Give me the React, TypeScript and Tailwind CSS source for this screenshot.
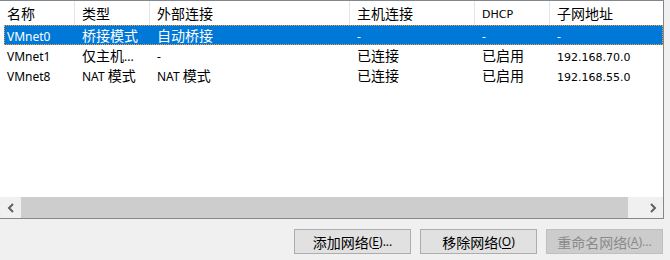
import React from "react";

const CJK_RE = /([\u2E80-\u9FFF\u3000-\u303F\uFF00-\uFFEF]+)/;

function T({ s, small = false }: { s: string; small?: boolean }) {
  const parts = s.split(CJK_RE).filter((p) => p.length > 0);
  return (
    <>
      {parts.map((p, i) =>
        CJK_RE.test(p) ? (
          <span key={i} className="text-[14px] font-['Noto_Sans_CJK_SC',sans-serif]">
            {p}
          </span>
        ) : (
          <span
            key={i}
            className={
              small
                ? "text-[11px] font-['DejaVu_Sans',sans-serif]"
                : "text-[12px] font-['Noto_Sans','Noto_Sans_CJK_SC',sans-serif]"
            }
          >
            {p}
          </span>
        )
      )}
    </>
  );
}

const widths = ["w-[75px]", "w-[75px]", "w-[200px]", "w-[125px]", "w-[75px]", "flex-1"];

const header = ["名称", "类型", "外部连接", "主机连接", "DHCP", "子网地址"];

const rows = [
  ["VMnet0", "桥接模式", "自动桥接", "-", "-", "-"],
  ["VMnet1", "仅主机...", "-", "已连接", "已启用", "192.168.70.0"],
  ["VMnet8", "NAT 模式", "NAT 模式", "已连接", "已启用", "192.168.55.0"],
];

function Cell({ i, text, first }: { i: number; text: string; first?: boolean }) {
  const w = first ? "w-[71px] pl-[3px]" : widths[i] + " pl-[7px]";
  return (
    <div className={`${w} shrink-0 h-[20px] leading-[20px] whitespace-nowrap overflow-hidden`}>
      <T s={text} small={i === 5 && /^\d/.test(text)} />
    </div>
  );
}

function Button({ label, hot, tail, disabled }: { label: string; hot: string; tail: string; disabled?: boolean }) {
  return (
    <div
      className={`w-[117px] h-[25px] flex items-center justify-center border leading-none ${
        disabled
          ? "bg-[#cccccc] border-[#bfbfbf] text-[#8a8a8a]"
          : "bg-[#e1e1e1] border-[#adadad] text-black"
      }`}
    >
      <span className="text-[14px] font-['Noto_Sans_CJK_SC',sans-serif]">{label}</span>
      <span className="text-[12px] font-['Noto_Sans',sans-serif]">
        (<span className="underline underline-offset-2">{hot}</span>){tail}
      </span>
    </div>
  );
}

export default function App() {
  return (
    <div className="w-[670px] h-[260px] bg-[#f0f0f0] flex flex-col overflow-hidden text-black">
      <div className="w-[664px] h-[219px] bg-white border-t border-r border-b border-[#828790] flex flex-col">
        {/* header */}
        <div className="h-[24px] flex shrink-0">
          {header.map((h, i) => (
            <div
              key={i}
              className={`${widths[i]} shrink-0 h-full pl-[7px] flex items-center whitespace-nowrap ${
                i < 5 ? "border-r border-[#e5e5e5]" : ""
              }`}
            >
              <span className="leading-[20px]">
                <T s={h} small={h === "DHCP"} />
              </span>
            </div>
          ))}
        </div>
        {/* rows */}
        <div className="flex-1 flex flex-col">
          {rows.map((r, ri) => (
            <div
              key={ri}
              className={`ml-[4px] flex h-[20px] ${
                ri === 0
                  ? "bg-[#0078d7] text-white outline-1 outline-dotted outline-[#ff9a2e] -outline-offset-1"
                  : ""
              }`}
            >
              {r.map((c, ci) => (
                <Cell key={ci} i={ci} text={c} first={ci === 0} />
              ))}
            </div>
          ))}
        </div>
        {/* horizontal scrollbar */}
        <div className="h-[21px] flex shrink-0 bg-[#f0f0f0]">
          <div className="w-[21px] h-full flex items-center justify-center">
            <svg width="8" height="10" viewBox="0 0 8 10">
              <polyline points="6,1 2,5 6,9" fill="none" stroke="#606060" strokeWidth="2" />
            </svg>
          </div>
          <div className="w-[607px] h-full bg-[#cdcdcd]" />
          <div className="flex-1" />
          <div className="w-[21px] h-full flex items-center justify-center">
            <svg width="8" height="10" viewBox="0 0 8 10">
              <polyline points="2,1 6,5 2,9" fill="none" stroke="#606060" strokeWidth="2" />
            </svg>
          </div>
        </div>
      </div>
      <div className="mt-[10px] flex justify-end gap-[9px] pr-[7px]">
        <Button label="添加网络" hot="E" tail="..." />
        <Button label="移除网络" hot="O" tail="" />
        <Button label="重命名网络" hot="A" tail="..." disabled />
      </div>
    </div>
  );
}
